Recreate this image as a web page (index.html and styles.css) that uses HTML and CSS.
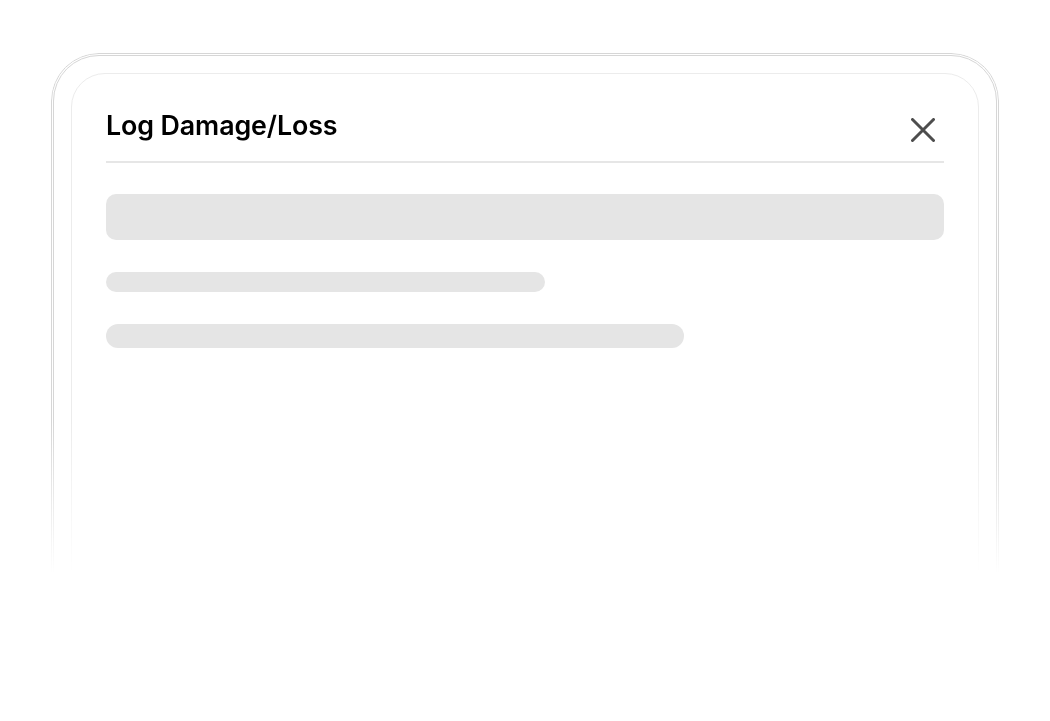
FILE: index.html
```html
<!DOCTYPE html>
<html lang="en">
<head>
<meta charset="utf-8">
<title>Log Damage/Loss</title>
<link rel="stylesheet" href="styles.css">
</head>
<body>
<div class="device">
  <div class="screen">
    <div class="header">
      <h1 class="title">Log Damage/Loss</h1>
      <button class="close" aria-label="Close">
        <svg width="24" height="24" viewBox="0 0 24 24" fill="none" stroke="#4d4d4d" stroke-width="3" stroke-linecap="round">
          <path d="M1.5 1.5 L22.5 22.5 M22.5 1.5 L1.5 22.5"/>
        </svg>
      </button>
    </div>
    <div class="body">
      <div class="sk sk-input"></div>
      <div class="sk sk-line1"></div>
      <div class="sk sk-line2"></div>
    </div>
  </div>
</div>
</body>
</html>
```
FILE: styles.css
```css
html, body {
  margin: 0;
  padding: 0;
  background: #ffffff;
}
body {
  font-family: Inter, "Noto Sans", sans-serif;
  padding: 53px 51px 0 51px;
  height: 721px;
  box-sizing: border-box;
  overflow: hidden;
}
.device {
  width: 948px;
  height: 668px;
  box-sizing: border-box;
  border: 3px double #d6d6d6;
  border-radius: 48px;
  padding: 17px 17px 0 17px;
  background: #ffffff;
  box-shadow: 0 8px 40px rgba(0, 0, 0, 0.06);
  -webkit-mask-image: linear-gradient(to bottom, #000 0%, #000 55%, transparent 78%);
  mask-image: linear-gradient(to bottom, #000 0%, #000 55%, transparent 78%);
}
.screen {
  height: 100%;
  box-sizing: border-box;
  border: 1px solid #ececec;
  border-radius: 34px;
  padding: 0 34px;
}
.header {
  display: flex;
  justify-content: space-between;
  align-items: center;
  height: 89px;
  box-sizing: border-box;
  padding-top: 15px;
  border-bottom: 2px solid #e6e6e6;
}
.title {
  margin: 0;
  font-size: 26.8px;
  font-weight: 600;
  color: #000000;
  letter-spacing: -0.1px;
}
.close {
  border: 0;
  background: none;
  padding: 0;
  margin: 10px 9px 0 0;
  width: 24px;
  height: 24px;
  display: flex;
}
.body {
  padding-top: 31px;
  display: flex;
  flex-direction: column;
  gap: 32px;
}
.sk {
  background: #e5e5e5;
}
.sk-input {
  height: 46px;
  border-radius: 10px;
}
.sk-line1 {
  width: 439px;
  height: 20px;
  border-radius: 10px;
}
.sk-line2 {
  width: 578px;
  height: 24px;
  border-radius: 12px;
}
```
